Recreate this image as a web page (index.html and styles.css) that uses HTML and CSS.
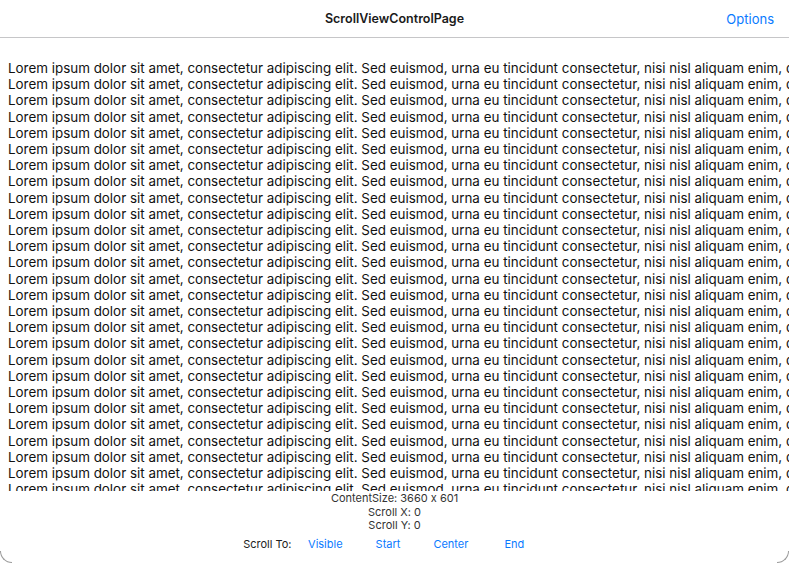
FILE: index.html
```html
<!DOCTYPE html>
<html>
<head>
<meta charset="utf-8">
<link rel="stylesheet" href="styles.css">
</head>
<body>
<div class="window">
  <header class="navbar">
    <div class="nav-title">ScrollViewControlPage</div>
    <div class="nav-action">Options</div>
  </header>
  <main class="scroller">
    <div class="content" id="content"></div>
  </main>
  <section class="status">
    <div class="info">ContentSize: 3660 x 601</div>
    <div class="info">Scroll X: 0</div>
    <div class="info">Scroll Y: 0</div>
    <div class="scroll-to">
      <span class="label">Scroll To:</span>
      <span class="btn">Visible</span>
      <span class="btn">Start</span>
      <span class="btn">Center</span>
      <span class="btn end">End</span>
    </div>
  </section>
  <div class="corner left"></div>
  <div class="corner right"></div>
</div>
<script>
  var s = "Lorem ipsum dolor sit amet, consectetur adipiscing elit. Sed euismod, urna eu tincidunt consectetur, nisi nisl aliquam enim, quis tincidunt nisl nisi eu nunc. Lorem ipsum dolor sit amet, consectetur adipiscing elit.";
  var c = document.getElementById("content");
  for (var i = 0; i < 37; i++) {
    var d = document.createElement("div");
    d.className = "line";
    d.textContent = s;
    c.appendChild(d);
  }
</script>
</body>
</html>
```
FILE: styles.css
```css
html, body {
  margin: 0;
  padding: 0;
  background: #ffffff;
}
body {
  font-family: "Inter", "Liberation Sans", sans-serif;
  font-feature-settings: "calt" 0;
  color: #000;
}
.window {
  position: relative;
  width: 789px;
  height: 563px;
  overflow: hidden;
  display: flex;
  flex-direction: column;
}
.navbar {
  position: relative;
  height: 37px;
  flex: none;
  border-bottom: 1px solid #c6c6c8;
  display: flex;
  align-items: center;
  justify-content: center;
}
.nav-title {
  font-size: 12.5px;
  font-weight: 600;
  color: #1a1a1a;
}
.nav-action {
  position: absolute;
  right: 15px;
  top: 11px;
  font-size: 13px;
  color: #0a7aff;
}
.scroller {
  height: 453px;
  flex: none;
  overflow: hidden;
  padding: 22px 0 0 8px;
  box-sizing: border-box;
}
.line {
  white-space: nowrap;
  font-size: 13.4px;
  line-height: 16.2px;
  color: #111;
}
.status {
  display: flex;
  flex-direction: column;
  align-items: center;
  padding-top: 1px;
}
.info {
  font-size: 11px;
  line-height: 13.5px;
  color: #333;
}
.scroll-to {
  display: flex;
  align-items: center;
  margin-top: 4px;
  font-size: 11px;
  line-height: 14px;
  margin-left: -5px;
}
.label {
  color: #222;
}
.btn {
  color: #0a7aff;
  padding: 0 16.5px;
}
.btn.end {
  padding-left: 19.5px;
}
.corner {
  position: absolute;
  bottom: 0;
  width: 12px;
  height: 12px;
  border-bottom: 1px solid #9a9a9a;
  box-sizing: border-box;
}
.corner.left {
  left: 0;
  border-left: 1px solid #9a9a9a;
  border-bottom-left-radius: 12px;
}
.corner.right {
  right: 0;
  border-right: 1px solid #9a9a9a;
  border-bottom-right-radius: 12px;
}
```
